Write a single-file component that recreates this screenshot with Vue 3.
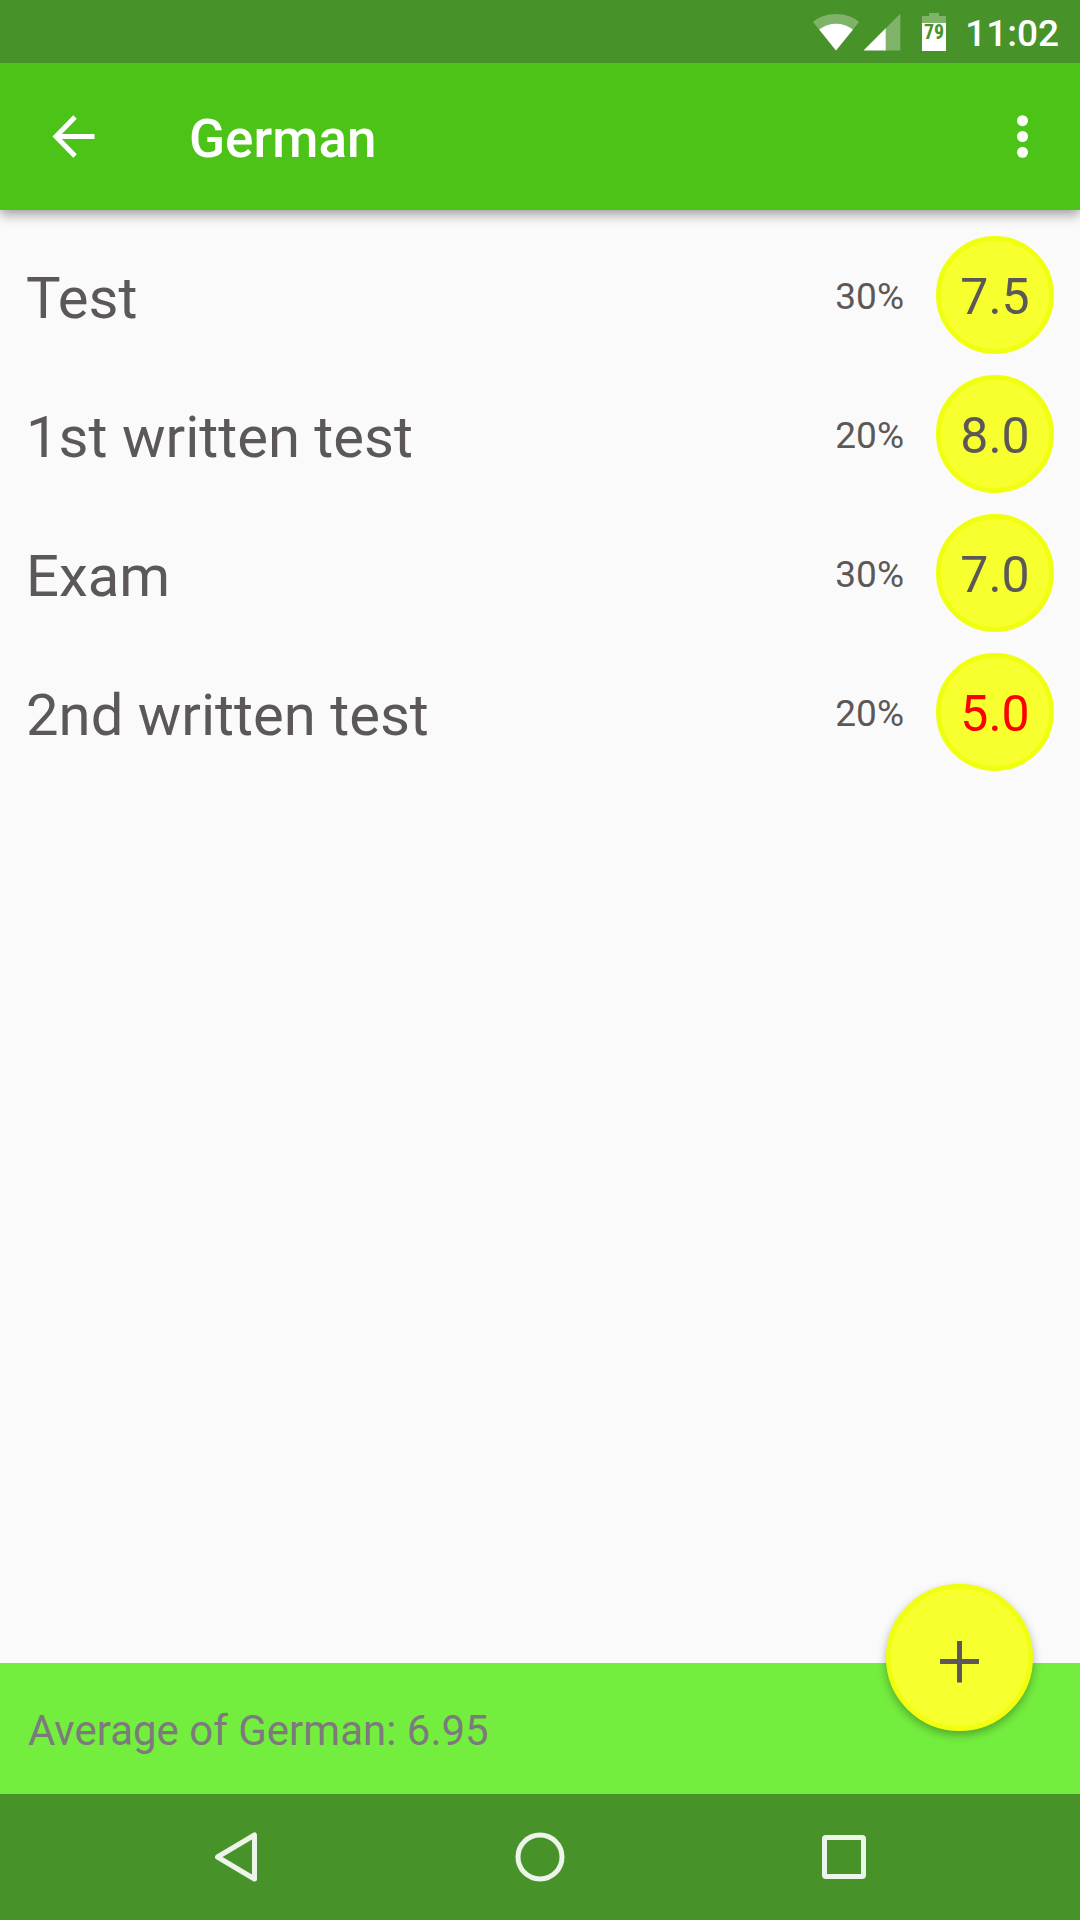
<script setup>
const subject = 'German'
const average = '6.95'
const grades = [
  { name: 'Test', weight: '30%', grade: '7.5' },
  { name: '1st written test', weight: '20%', grade: '8.0' },
  { name: 'Exam', weight: '30%', grade: '7.0' },
  { name: '2nd written test', weight: '20%', grade: '5.0' }
]
</script>

<template>
  <div class="screen">
    <div class="status-bar">
      <svg class="wifi" width="48" height="38" viewBox="0 0 48 38" aria-hidden="true">
        <path d="M1 9Q10 1 24 1T47 9L24 37.500Z" fill="#fff" fill-opacity=".3" />
        <path d="M7.200 16.500Q15 10.700 24 10.700T41 16.500L24 37.500Z" fill="#fff" />
      </svg>
      <svg class="signal" width="38" height="38" viewBox="0 0 38 38" aria-hidden="true">
        <path d="M37.300 .7V37.500H22V16Z" fill="#fff" fill-opacity=".3" />
        <path d="M22.700 15.300V37.500H.5Z" fill="#fff" />
      </svg>
      <svg class="battery" width="24" height="38" viewBox="0 0 24 38" role="img" aria-label="Battery">
        <path d="M7 0H17V3H24V10H0V3H7Z" fill="#fff" fill-opacity=".3" />
        <path d="M0 10H24V38H0Z" fill="#fff" />
        <text x="12" y="26" text-anchor="middle" class="battery-level">79</text>
      </svg>
      <time class="clock">11:02</time>
    </div>

    <header class="app-bar">
      <button class="icon-button" type="button" aria-label="Back">
        <svg width="48" height="48" viewBox="0 0 48 48">
          <path d="M25 4 6 23.500 25 43M6 23.500H44.500" fill="none" stroke="#fff" stroke-width="5" />
        </svg>
      </button>
      <h1 class="title">{{ subject }}</h1>
      <button class="icon-button" type="button" aria-label="More options">
        <svg width="48" height="48" viewBox="0 0 48 48" fill="#fff">
          <circle cx="23.500" cy="7.700" r="5.500" />
          <circle cx="23.500" cy="23.500" r="5.500" />
          <circle cx="23.500" cy="39.300" r="5.500" />
        </svg>
      </button>
    </header>

    <main class="content">
      <ul class="grades">
        <li v-for="item in grades" :key="item.name" class="row">
          <span class="name">{{ item.name }}</span>
          <span class="weight">{{ item.weight }}</span>
          <span class="badge" :class="{ failing: Number(item.grade) < 5.5 }">{{ item.grade }}</span>
        </li>
      </ul>
    </main>

    <footer class="summary">
      <p class="average">Average of {{ subject }}: {{ average }}</p>
      <button class="fab" type="button" aria-label="Add grade">
        <svg width="48" height="48" viewBox="0 0 48 48">
          <path d="M23.500 3V44.500M4 23.500H43" fill="none" stroke="#5c5858" stroke-width="5" />
        </svg>
      </button>
    </footer>

    <nav class="nav-bar" aria-label="System">
      <button class="nav-button" type="button" aria-label="Back">
        <svg width="56" height="56" viewBox="0 0 56 56">
          <path d="M9.500 28 46.500 6V50Z" />
        </svg>
      </button>
      <button class="nav-button" type="button" aria-label="Home">
        <svg width="56" height="56" viewBox="0 0 56 56">
          <circle cx="28" cy="28" r="22" />
        </svg>
      </button>
      <button class="nav-button" type="button" aria-label="Recent apps">
        <svg width="56" height="56" viewBox="0 0 56 56">
          <rect x="8.500" y="8.500" width="39" height="39" rx="1.500" />
        </svg>
      </button>
    </nav>
  </div>
</template>

<style>
body {
  background: #fafafa;
}
</style>

<style scoped>
.screen {
  display: flex;
  flex-direction: column;
  min-height: 100vh;
  background: #fafafa;
  color: #5c5858;
  font-family: Roboto, sans-serif;
}

button {
  display: flex;
  align-items: center;
  justify-content: center;
  padding: 0;
  border: 0;
  background: none;
}

svg {
  display: block;
}

.status-bar {
  position: relative;
  z-index: 1;
  display: flex;
  align-items: center;
  justify-content: flex-end;
  height: 63px;
  padding-right: 21px;
  background: #48922a;
  color: #fff;
}

.signal {
  margin-left: 3px;
}

.battery {
  margin-left: 21px;
}

.battery-level {
  fill: #48922a;
  font-family: "Roboto Condensed", Roboto, sans-serif;
  font-size: 20px;
  font-weight: 700;
}

.clock {
  margin-left: 19px;
  padding-top: 4px;
  font-size: 37px;
  font-weight: 500;
  line-height: 44px;
}

.app-bar {
  position: relative;
  display: flex;
  align-items: center;
  height: 147px;
  padding: 0 9px 0 26px;
  background: #4cc417;
  box-shadow: 0 4px 12px rgba(0, 0, 0, .4);
}

.icon-button {
  width: 96px;
  height: 96px;
}

.title {
  flex: 1;
  margin: 0;
  padding: 4px 0 0 67px;
  color: #fff;
  font-size: 53px;
  font-weight: 500;
  line-height: 64px;
}

.content {
  flex: 1;
  padding: 15px 26px;
}

.grades {
  margin: 0;
  padding: 0;
  list-style: none;
}

.row {
  display: flex;
  align-items: center;
  height: 139px;
}

.name {
  flex: 1;
  padding-top: 6px;
  font-size: 58px;
  line-height: 68px;
}

.weight {
  padding-top: 4px;
  font-size: 37px;
  line-height: 44px;
}

.badge {
  box-sizing: border-box;
  width: 118px;
  height: 118px;
  margin-left: 32px;
  padding-top: 2px;
  border: 5px solid #f0ff0f;
  border-radius: 50%;
  background: #f8ff2e;
  font-size: 50px;
  line-height: 108px;
  text-align: center;
}

.failing {
  color: #f00;
}

.summary {
  position: relative;
  display: flex;
  align-items: center;
  height: 131px;
  padding: 0 28px;
  background: #74ee3e;
}

.average {
  margin: 0;
  padding-top: 4px;
  color: #7c7a7a;
  font-size: 42px;
  line-height: 50px;
}

.fab {
  position: absolute;
  right: 47px;
  bottom: 63px;
  box-sizing: border-box;
  width: 147px;
  height: 147px;
  padding-top: 8px;
  border: 5px solid #f0ff0f;
  border-radius: 50%;
  background: #f8ff2e;
  box-shadow: 0 4px 10px rgba(0, 0, 0, .3);
}

.nav-bar {
  display: grid;
  grid-template-columns: repeat(3, 1fr);
  height: 126px;
  padding: 0 84px;
  background: #48922a;
}

.nav-button svg {
  fill: none;
  stroke: #edf4ea;
  stroke-width: 5;
  stroke-linejoin: round;
}
</style>
